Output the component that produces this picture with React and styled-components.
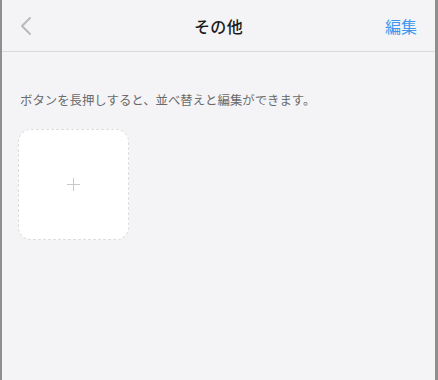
import styled, { createGlobalStyle } from "styled-components";

const GlobalStyle = createGlobalStyle`
  html, body {
    margin: 0;
    padding: 0;
    background: #f4f4f6;
  }
  body {
    font-family: "Noto Sans CJK JP", "Noto Sans", sans-serif;
  }
`;

const Frame = styled.div`
  box-sizing: border-box;
  width: 438px;
  height: 380px;
  background: #f4f4f6;
  border-left: 2px solid #8f8f8f;
  border-right: 3px solid #8f8f8f;
  display: flex;
  flex-direction: column;
`;

const NavBar = styled.header`
  height: 51px;
  flex: none;
  display: grid;
  grid-template-columns: 60px 1fr 60px;
  align-items: center;
  border-bottom: 1px solid #d9d9dc;
  background: #f4f4f6;
`;

const BackButton = styled.button`
  border: 0;
  background: none;
  padding: 0 0 0 18px;
  display: flex;
  align-items: center;
  cursor: pointer;
`;

const Title = styled.h1`
  margin: 0;
  text-align: center;
  font-size: 16px;
  font-weight: 500;
  color: #1a1a1a;
  letter-spacing: 0.3px;
`;

const EditLink = styled.button`
  border: 0;
  background: none;
  padding: 0 18px 0 0;
  justify-self: end;
  font-family: inherit;
  font-size: 16px;
  color: #3d97f0;
  cursor: pointer;
`;

const Body = styled.main`
  padding: 39px 16px 0;
  display: flex;
  flex-direction: column;
  gap: 20px;
`;

const Hint = styled.p`
  margin: 0 0 0 2px;
  font-size: 12.4px;
  color: #6a6a6a;
  line-height: 18px;
`;

const AddTile = styled.button`
  width: 111px;
  height: 111px;
  box-sizing: border-box;
  background: #fff;
  border: 1px dashed #dedede;
  border-radius: 13px;
  display: flex;
  align-items: center;
  justify-content: center;
  padding: 0;
  cursor: pointer;
`;

export default function App() {
  return (
    <>
      <GlobalStyle />
      <Frame>
        <NavBar>
          <BackButton aria-label="戻る">
            <svg width="12" height="20" viewBox="0 0 12 20" fill="none">
              <path d="M10 2 L2 10 L10 18" stroke="#b8b8bc" strokeWidth="1.8" strokeLinecap="round" strokeLinejoin="round" />
            </svg>
          </BackButton>
          <Title>その他</Title>
          <EditLink>編集</EditLink>
        </NavBar>
        <Body>
          <Hint>ボタンを長押しすると、並べ替えと編集ができます。</Hint>
          <AddTile aria-label="追加">
            <svg width="13" height="13" viewBox="0 0 13 13">
              <path d="M6.5 0 V13 M0 6.5 H13" stroke="#c9c9c9" strokeWidth="1" />
            </svg>
          </AddTile>
        </Body>
      </Frame>
    </>
  );
}
